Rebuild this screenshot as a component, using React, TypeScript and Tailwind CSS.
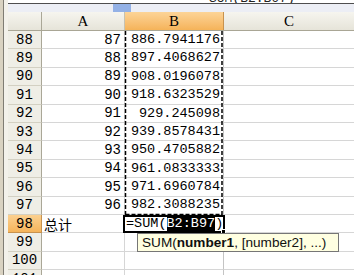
import type { FC } from "react";

type RowData = { num: number; a?: string; b?: string };

const rows: RowData[] = [
  { num: 88, a: "87", b: "886.7941176" },
  { num: 89, a: "88", b: "897.4068627" },
  { num: 90, a: "89", b: "908.0196078" },
  { num: 91, a: "90", b: "918.6323529" },
  { num: 92, a: "91", b: "929.245098" },
  { num: 93, a: "92", b: "939.8578431" },
  { num: 94, a: "93", b: "950.4705882" },
  { num: 95, a: "94", b: "961.0833333" },
  { num: 96, a: "95", b: "971.6960784" },
  { num: 97, a: "96", b: "982.3088235" },
  { num: 98, a: "总计" },
  { num: 99 },
  { num: 100 },
  { num: 101 },
];

const Row: FC<{ row: RowData }> = ({ row }) => {
  const active = row.num === 98;
  return (
    <div className="flex h-[18.4px] shrink-0">
      <div
        className={
          active
            ? "flex w-[34px] items-center justify-center border-r border-b border-[#c8924e] bg-gradient-to-b from-[#fbd08f] to-[#f5b45a] leading-none"
            : "flex w-[34px] items-center justify-center border-r border-b border-r-[#aaa797] border-b-[#d3d0c2] bg-[#efeee6] leading-none"
        }
      >
        {row.num}
      </div>
      {row.num === 98 ? (
        <div className="flex w-[83px] items-center border-r border-b border-[#d6d6d6] pl-[2px] font-['Noto_Sans_CJK_SC',sans-serif] text-[14px] leading-none">
          {row.a}
        </div>
      ) : (
        <div className="flex w-[83px] items-center justify-end border-r border-b border-[#d6d6d6] pr-[3px] leading-none">
          {row.a}
        </div>
      )}
      <div className="flex w-[99px] items-center justify-end border-r border-b border-r-[#c4c4c4] border-b-[#d6d6d6] pr-[3px] text-[13.5px] leading-none">
        {row.b}
      </div>
      <div className="flex-1 border-b border-[#d6d6d6]" />
    </div>
  );
};

const App: FC = () => (
  <div className="relative flex h-[275px] w-[354px] overflow-hidden bg-white font-['Liberation_Mono',monospace] text-[14px] text-black">
    {/* window edge on the left */}
    <div className="flex h-full w-[8px] shrink-0">
      <div className="w-[3px] bg-[#d9d2c1]" />
      <div className="w-[1px] bg-[#7f7c73]" />
      <div className="w-[4px] bg-[#f3f1ea]" />
    </div>

    <div className="flex w-[346px] flex-col">
      {/* formula bar, cut at the top */}
      <div className="flex h-[4px] shrink-0 items-end overflow-hidden border-b border-[#4e4e4e] bg-white pl-[201px]">
        <span className="-mb-[1px] text-[13px] leading-[10px] text-[#222]">SUM(B2:B97)</span>
      </div>
      <div className="flex h-[8px] shrink-0 bg-[#eceef5]">
        <div className="w-[105px]" />
        <div className="w-[18px] bg-[#93b1e6]" />
      </div>

      {/* column headers */}
      <div className="flex h-[19px] shrink-0 border-b border-[#a9a695] font-['Liberation_Serif',serif] text-[15px] leading-none">
        <div className="w-[34px] border-r border-[#aaa797] bg-gradient-to-b from-[#f6f5ef] to-[#e6e4d9]" />
        <div className="flex w-[83px] items-center justify-center border-r border-[#c5c2b3] bg-gradient-to-b from-[#f6f5ef] to-[#e6e4d9]">
          A
        </div>
        <div className="flex w-[99px] items-center justify-center border-r border-[#c8924e] bg-gradient-to-b from-[#fcd497] to-[#f5b359]">
          B
        </div>
        <div className="flex flex-1 items-center justify-center bg-gradient-to-b from-[#f6f5ef] to-[#e6e4d9]">
          C
        </div>
      </div>

      <div className="relative flex flex-col">
        {rows.map((row) => (
          <Row key={row.num} row={row} />
        ))}

        {/* copy marquee around B2:B97 */}
        <svg className="absolute left-[116px] top-0" width="100" height="186">
          <g stroke="#000" strokeWidth="1.5" strokeDasharray="4 2" fill="none">
            <line x1="1.5" y1="0" x2="1.5" y2="184" />
            <line x1="98" y1="0" x2="98" y2="184" />
            <line x1="1.5" y1="183.5" x2="98" y2="183.5" />
          </g>
        </svg>

        {/* cell being edited */}
        <div className="absolute left-[115px] top-[184px] flex h-[18px] w-[102px] items-center border-2 border-black bg-white pl-[1px] text-[13.5px] leading-none">
          <span>=SUM(</span>
          <span className="bg-black text-white">B2:B97</span>
          <span>)</span>
          <div className="absolute -right-[3px] -bottom-[3px] h-[5px] w-[5px] border border-white bg-black" />
        </div>

        {/* function hint */}
        <div className="absolute left-[129px] top-[202px] flex h-[19px] w-[202px] items-center border border-[#767676] bg-[#ffffe1] pl-[4px] font-['Liberation_Sans',sans-serif] text-[13.6px] leading-none text-[#111]">
          SUM(<span className="font-bold">number1</span>, [number2], ...)
        </div>
      </div>
    </div>
  </div>
);

export default App;
